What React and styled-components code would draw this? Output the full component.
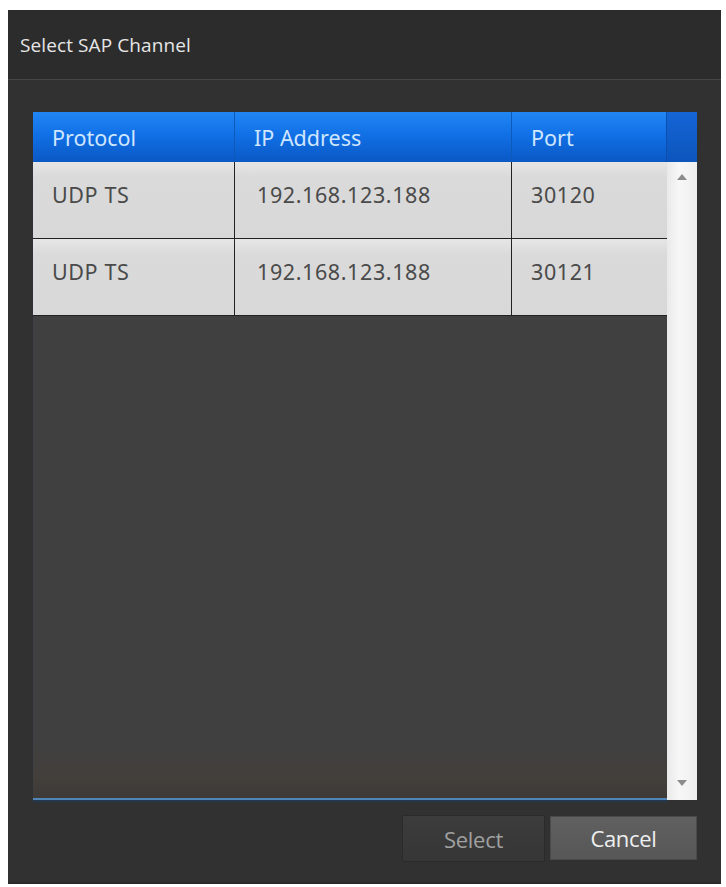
import React from 'react';
import styled, { createGlobalStyle } from 'styled-components';

const GlobalStyle = createGlobalStyle`
  html, body {
    margin: 0;
    padding: 0;
    background: #ffffff;
  }
  body {
    padding: 10px 5px 3px 8px;
  }
`;

const channels = [
  { protocol: 'UDP TS', ip: '192.168.123.188', port: '30120' },
  { protocol: 'UDP TS', ip: '192.168.123.188', port: '30121' },
];

const COLUMNS = '202px 277px 155px';
const TABLE_FONT = "'Noto Sans', 'Open Sans', sans-serif";
const UI_FONT = "'Open Sans', 'Noto Sans', sans-serif";

const Dialog = styled.div`
  width: 713px;
  height: 874px;
  display: flex;
  flex-direction: column;
  background: #313131;
  box-sizing: border-box;
  border-bottom: 2px solid #2a2a2a;
`;

const TitleBar = styled.div`
  height: 70px;
  display: flex;
  align-items: center;
  padding-left: 12px;
  background: #2c2c2c;
  border-bottom: 1px solid #474747;
  color: #e6e6e6;
  font-family: ${UI_FONT};
  font-size: 19px;
  letter-spacing: 0.1px;
`;

const Body = styled.div`
  flex: 1;
  display: flex;
  flex-direction: column;
  padding: 32px 24px 20px 25px;
`;

const ListFrame = styled.div`
  display: flex;
  flex-direction: column;
  height: 688px;
`;

const HeaderRow = styled.div`
  display: grid;
  grid-template-columns: ${COLUMNS} 30px;
  height: 50px;
`;

const HeaderCell = styled.div`
  display: flex;
  align-items: center;
  padding-left: 19px;
  background: linear-gradient(#2186f4, #1170e6 45%, #0a58c4);
  border-right: 1px solid ${({ last }) => (last ? '#0b4fb0' : '#0e5ab9')};
  color: #cfe6ff;
  font-family: ${TABLE_FONT};
  font-size: 21.5px;
`;

const Corner = styled.div`
  background: linear-gradient(#1565d6, #0c55bc);
`;

const Content = styled.div`
  flex: 1;
  display: flex;
  min-height: 0;
`;

const RowsArea = styled.div`
  flex: 1;
  background: linear-gradient(#404040 92%, #433f3b 97%, #3d3a38);
  border-bottom: 2px solid #5286b6;
  box-shadow: 0 2px 1px #24384d;
`;

const Row = styled.div`
  display: grid;
  grid-template-columns: ${COLUMNS};
  height: 77px;
  background: linear-gradient(#e6e6e6, #dadada 20%, #d8d8d8);
  border-bottom: 1px solid #222222;
  box-sizing: border-box;
`;

const Cell = styled.div`
  display: flex;
  align-items: center;
  padding-left: ${({ pad }) => pad}px;
  padding-bottom: 12px;
  border-right: ${({ last }) => (last ? 'none' : '1px solid #222222')};
  color: #4a4a4a;
  font-family: ${TABLE_FONT};
  font-size: 21.5px;
  letter-spacing: 0.6px;
`;

const Scrollbar = styled.div`
  width: 30px;
  display: flex;
  flex-direction: column;
  justify-content: space-between;
  align-items: center;
  padding: 12px 0 14px;
  box-sizing: border-box;
  background: linear-gradient(90deg, #e9e9e9, #f7f7f7 40%, #efefef);
`;

const Arrow = styled.svg`
  width: 10px;
  height: 6px;
  fill: #8c8c8c;
`;

const ButtonRow = styled.div`
  display: flex;
  justify-content: flex-end;
  gap: 5px;
  margin-top: 15px;
`;

const Button = styled.button`
  width: ${({ wide }) => (wide ? 147 : 143)}px;
  height: ${({ primary }) => (primary ? 44 : 47)}px;
  margin-top: ${({ primary }) => (primary ? 1 : 0)}px;
  border: 1px solid ${({ primary }) => (primary ? '#4a4a4a' : '#2b2b2b')};
  background: ${({ primary }) =>
    primary ? 'linear-gradient(#606060, #575757)' : 'linear-gradient(#3c3c3c, #363636)'};
  color: ${({ primary }) => (primary ? '#efefef' : '#a0a0a0')};
  font-family: ${UI_FONT};
  font-size: 22px;
  letter-spacing: -0.3px;
  padding: 0;
  cursor: default;
`;

export default function App() {
  return (
    <>
      <GlobalStyle />
      <Dialog>
        <TitleBar>Select SAP Channel</TitleBar>
        <Body>
          <ListFrame>
            <HeaderRow>
              <HeaderCell>Protocol</HeaderCell>
              <HeaderCell>IP Address</HeaderCell>
              <HeaderCell last>Port</HeaderCell>
              <Corner />
            </HeaderRow>
            <Content>
              <RowsArea>
                {channels.map((ch) => (
                  <Row key={ch.port}>
                    <Cell pad={19}>{ch.protocol}</Cell>
                    <Cell pad={22}>{ch.ip}</Cell>
                    <Cell pad={19} last>
                      {ch.port}
                    </Cell>
                  </Row>
                ))}
              </RowsArea>
              <Scrollbar>
                <Arrow viewBox="0 0 10 6">
                  <path d="M5 0 L10 6 L0 6 Z" />
                </Arrow>
                <Arrow viewBox="0 0 10 6">
                  <path d="M0 0 L10 0 L5 6 Z" />
                </Arrow>
              </Scrollbar>
            </Content>
          </ListFrame>
          <ButtonRow>
            <Button>Select</Button>
            <Button primary wide>
              Cancel
            </Button>
          </ButtonRow>
        </Body>
      </Dialog>
    </>
  );
}
